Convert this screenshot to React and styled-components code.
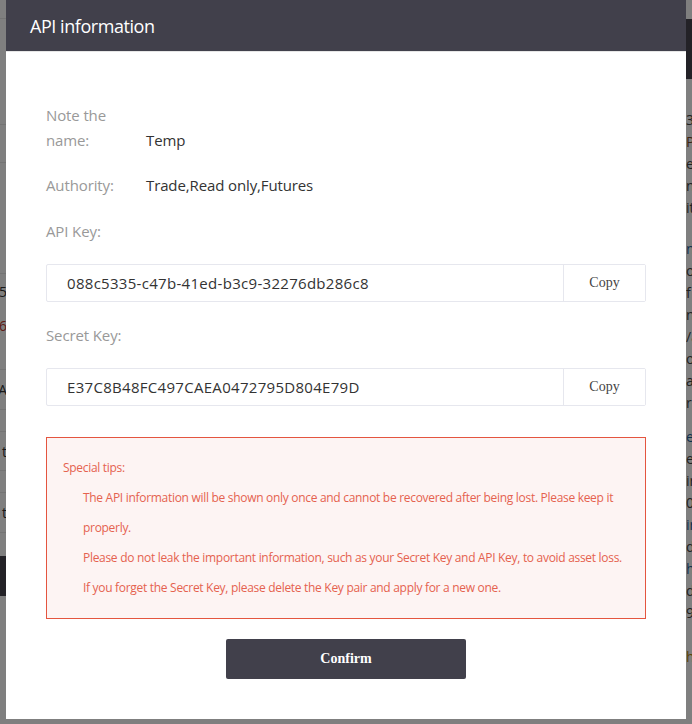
import React from "react";
import styled, { createGlobalStyle } from "styled-components";

const Global = createGlobalStyle`
  html, body { margin: 0; padding: 0; }
  body {
    width: 692px;
    height: 724px;
    overflow: hidden;
    background: #ffffff;
    font-family: "Open Sans", "Liberation Sans", sans-serif;
  }
`;

/* ---------- background page (seen under the mask) ---------- */
const Page = styled.div`
  display: flex;
  justify-content: space-between;
  width: 692px;
  height: 724px;
  background: #fff;
  overflow: hidden;
`;

const SideCol = styled.div`
  width: ${(p) => p.$w}px;
  flex-shrink: 0;
  display: flex;
  flex-direction: column;
  align-items: ${(p) => (p.$right ? "flex-end" : "flex-start")};
  padding-top: ${(p) => p.$top}px;
`;

const BgRow = styled.div`
  width: 100%;
  height: ${(p) => p.$h}px;
  box-sizing: border-box;
  border-bottom: ${(p) => (p.$line ? "1px solid #e8e8e8" : "none")};
  display: flex;
  align-items: center;
  justify-content: flex-end;
  font-size: 14px;
  color: ${(p) => p.$color || "#333"};
  white-space: nowrap;
`;

const BgBar = styled.div`
  width: ${(p) => p.$w}px;
  height: ${(p) => p.$h}px;
  background: #46454f;
  flex-shrink: 0;
  margin-top: ${(p) => p.$mt || 0}px;
`;

const BgText = styled.div`
  width: 100%;
  font-size: 14px;
  line-height: 22px;
  margin-top: ${(p) => p.$mt || 0}px;
  color: ${(p) => p.$color || "#444"};
  text-align: left;
  box-sizing: border-box;
  white-space: nowrap;
`;

/* ---------- mask + modal ---------- */
const Mask = styled.div`
  position: fixed;
  inset: 0;
  background: rgba(0, 0, 0, 0.5);
  display: flex;
  justify-content: center;
  align-items: flex-start;
`;

const Modal = styled.div`
  width: 680px;
  height: 719px;
  background: #fff;
  display: flex;
  flex-direction: column;
`;

const Header = styled.div`
  height: 52px;
  flex-shrink: 0;
  background: #41404b;
  color: #fff;
  font-size: 18px;
  letter-spacing: -0.45px;
  display: flex;
  align-items: center;
  padding-left: 24px;
  border-bottom: 1px solid #e6e6e6;
  box-sizing: border-box;
`;

const Body = styled.div`
  padding: 51px 40px 40px;
  display: flex;
  flex-direction: column;
`;

const InfoRow = styled.div`
  display: flex;
  align-items: last baseline;
  font-size: 15px;
  line-height: 25px;
  letter-spacing: -0.12px;
  margin-bottom: ${(p) => p.$mb}px;
`;

const Label = styled.div`
  width: 80px;
  margin-right: 20px;
  color: #999;
  flex-shrink: 0;
`;

const Value = styled.div`
  color: #333;
`;

const FieldLabel = styled.div`
  font-size: 15px;
  line-height: 25px;
  letter-spacing: -0.12px;
  color: #999;
  margin-bottom: ${(p) => p.$mb}px;
`;

const KeyBox = styled.div`
  display: flex;
  height: 38px;
  border: 1px solid #e6e7ee;
  border-radius: 2px;
  box-sizing: border-box;
  margin-bottom: ${(p) => p.$mb}px;
`;

const KeyText = styled.div`
  flex: 1;
  display: flex;
  align-items: center;
  padding-left: 20px;
  font-size: 15px;
  letter-spacing: 0.3px;
  color: #333;
`;

const CopyButton = styled.button`
  width: 82px;
  border: none;
  border-left: 1px solid #e6e7ee;
  background: #fff;
  font-family: "Liberation Serif", serif;
  font-size: 14px;
  color: #444;
  padding: 0;
  cursor: pointer;
`;

const Tips = styled.div`
  border: 1px solid #e4553f;
  background: #fdf4f3;
  padding: 15px 16px;
  color: #e5624f;
  font-size: 12px;
  letter-spacing: -0.3px;
  line-height: 30px;
  margin-bottom: 20px;
`;

const TipItem = styled.div`
  padding-left: 20px;
`;

const ConfirmButton = styled.button`
  align-self: center;
  width: 240px;
  height: 40px;
  border: none;
  border-radius: 2px;
  background: #41404b;
  color: #fff;
  font-family: "Liberation Serif", serif;
  font-size: 14px;
  font-weight: bold;
  cursor: pointer;
`;

const leftRows = [
  { h: 19, line: true },
  { h: 106, line: true },
  { h: 38, line: true },
  { h: 111, line: true },
  { h: 34, t: "25" },
  { h: 34, t: "6", c: "#c0392b" },
  { h: 28, line: true },
  { h: 40, line: true, t: "A" },
  { h: 22, line: true },
  { h: 39, line: true, t: "t" },
  { h: 22, line: true },
  { h: 40, line: true, t: "t" },
];

const rightLines = [
  { t: "3.", mt: 30 },
  { t: "P", c: "#7a4a2a" },
  { t: "e" },
  { t: "n" },
  { t: "it" },
  { t: "n", mt: 19, c: "#1f5f9a" },
  { t: "o" },
  { t: "f" },
  { t: "n" },
  { t: "/a" },
  { t: "o" },
  { t: "ar" },
  { t: "re" },
  { t: "e", mt: 12, c: "#1f5f9a" },
  { t: "e" },
  { t: "ir" },
  { t: "0" },
  { t: "ir", c: "#1f5f9a" },
  { t: "d" },
  { t: "h", c: "#1f5f9a" },
  { t: "d" },
  { t: "9" },
  { t: "h", mt: 22, c: "#b8860b" },
];

export default function App() {
  return (
    <>
      <Global />
      <Page>
        <SideCol $w={7} $top={0}>
          {leftRows.map((r, i) => (
            <BgRow key={i} $h={r.h} $line={r.line} $color={r.c}>
              {r.t}
            </BgRow>
          ))}
          <BgBar $w={7} $h={40} $mt={23} />
        </SideCol>
        <SideCol $w={6} $right $top={19}>
          <BgBar $w={6} $h={60} />
          {rightLines.map((l, i) => (
            <BgText key={i} $mt={l.mt} $color={l.c}>
              {l.t}
            </BgText>
          ))}
        </SideCol>
      </Page>
      <Mask>
        <Modal>
          <Header>API information</Header>
          <Body>
            <InfoRow $mb={20}>
              <Label>Note the name:</Label>
              <Value>Temp</Value>
            </InfoRow>
            <InfoRow $mb={21}>
              <Label>Authority:</Label>
              <Value>Trade,Read only,Futures</Value>
            </InfoRow>
            <FieldLabel $mb={20}>API Key:</FieldLabel>
            <KeyBox $mb={21}>
              <KeyText>088c5335-c47b-41ed-b3c9-32276db286c8</KeyText>
              <CopyButton>Copy</CopyButton>
            </KeyBox>
            <FieldLabel $mb={20}>Secret Key:</FieldLabel>
            <KeyBox $mb={31}>
              <KeyText>E37C8B48FC497CAEA0472795D804E79D</KeyText>
              <CopyButton>Copy</CopyButton>
            </KeyBox>
            <Tips>
              <div>Special tips:</div>
              <TipItem>
                The API information will be shown only once and cannot be
                recovered after being lost. Please keep it properly.
              </TipItem>
              <TipItem>
                Please do not leak the important information, such as your
                Secret Key and API Key, to avoid asset loss.
              </TipItem>
              <TipItem>
                If you forget the Secret Key, please delete the Key pair and
                apply for a new one.
              </TipItem>
            </Tips>
            <ConfirmButton>Confirm</ConfirmButton>
          </Body>
        </Modal>
      </Mask>
    </>
  );
}
